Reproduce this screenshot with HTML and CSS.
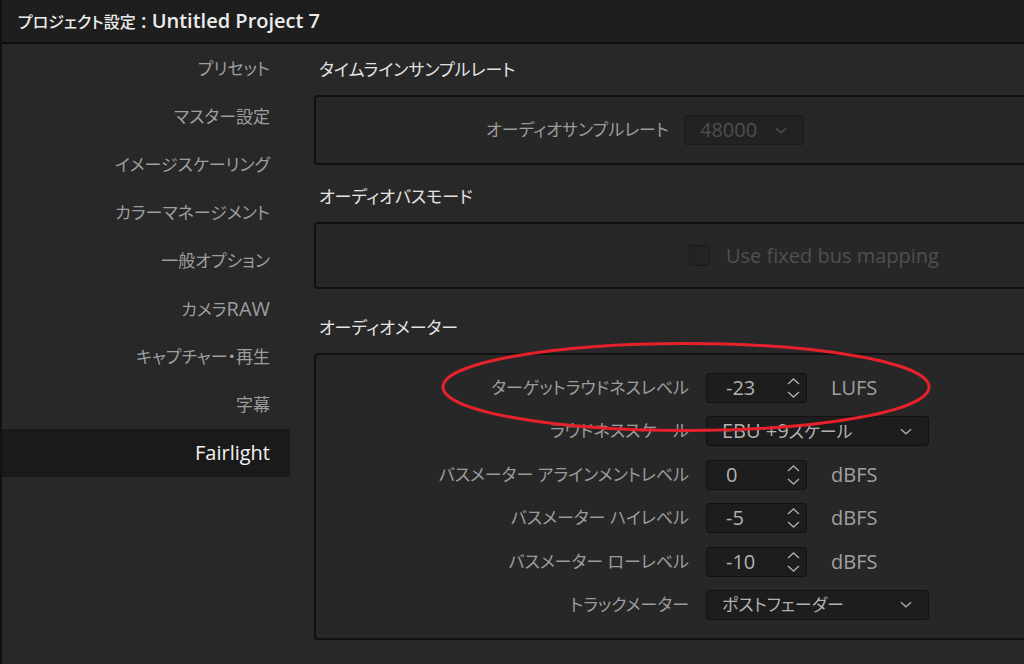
FILE: index.html
```html
<!DOCTYPE html>
<html lang="ja">
<head>
<meta charset="utf-8">
<title>プロジェクト設定</title>
<link rel="stylesheet" href="styles.css">
</head>
<body>
<div class="app">
  <header class="titlebar">プロジェクト設定<span class="lat"> : Untitled Project 7</span></header>
  <div class="main">
    <nav class="sidebar">
      <div class="nav-item">プリセット</div>
      <div class="nav-item">マスター設定</div>
      <div class="nav-item">イメージスケーリング</div>
      <div class="nav-item">カラーマネージメント</div>
      <div class="nav-item">一般オプション</div>
      <div class="nav-item">カメラ<span class="lat">RAW</span></div>
      <div class="nav-item">キャプチャー・再生</div>
      <div class="nav-item">字幕</div>
      <div class="nav-item active"><span class="lat">Fairlight</span></div>
    </nav>
    <main class="content">
      <section class="section s1">
        <h2 class="sec-title">タイムラインサンプルレート</h2>
        <div class="box box-rate">
          <div class="row row-rate">
            <span class="label">オーディオサンプルレート</span>
            <div class="select select-disabled">
              <span class="lat">48000</span>
              <svg class="chev" viewBox="0 0 13 7"><polyline points="1,1 6.5,6 12,1"/></svg>
            </div>
          </div>
        </div>
      </section>
      <section class="section s2">
        <h2 class="sec-title">オーディオバスモード</h2>
        <div class="box box-bus">
          <label class="check-row">
            <span class="checkbox"></span>
            <span class="check-text lat">Use fixed bus mapping</span>
          </label>
        </div>
      </section>
      <section class="section s3">
        <h2 class="sec-title">オーディオメーター</h2>
        <div class="box box-meter">
          <div class="row">
            <span class="label">ターゲットラウドネスレベル</span>
            <div class="ctl">
              <div class="spin"><span class="lat">-23</span><span class="arrows"><svg viewBox="0 0 13 7"><polyline points="1,6 6.5,1 12,6"/></svg><svg viewBox="0 0 13 7"><polyline points="1,1 6.5,6 12,1"/></svg></span></div>
              <span class="unit lat">LUFS</span>
            </div>
          </div>
          <div class="row">
            <span class="label">ラウドネススケール</span>
            <div class="select select-wide">
              <span><span class="lat">EBU +9</span>スケール</span>
              <svg class="chev" viewBox="0 0 13 7"><polyline points="1,1 6.5,6 12,1"/></svg>
            </div>
          </div>
          <div class="row">
            <span class="label">バスメーター アラインメントレベル</span>
            <div class="ctl">
              <div class="spin"><span class="lat">0</span><span class="arrows"><svg viewBox="0 0 13 7"><polyline points="1,6 6.5,1 12,6"/></svg><svg viewBox="0 0 13 7"><polyline points="1,1 6.5,6 12,1"/></svg></span></div>
              <span class="unit lat">dBFS</span>
            </div>
          </div>
          <div class="row">
            <span class="label">バスメーター ハイレベル</span>
            <div class="ctl">
              <div class="spin"><span class="lat">-5</span><span class="arrows"><svg viewBox="0 0 13 7"><polyline points="1,6 6.5,1 12,6"/></svg><svg viewBox="0 0 13 7"><polyline points="1,1 6.5,6 12,1"/></svg></span></div>
              <span class="unit lat">dBFS</span>
            </div>
          </div>
          <div class="row">
            <span class="label">バスメーター ローレベル</span>
            <div class="ctl">
              <div class="spin"><span class="lat">-10</span><span class="arrows"><svg viewBox="0 0 13 7"><polyline points="1,6 6.5,1 12,6"/></svg><svg viewBox="0 0 13 7"><polyline points="1,1 6.5,6 12,1"/></svg></span></div>
              <span class="unit lat">dBFS</span>
            </div>
          </div>
          <div class="row">
            <span class="label">トラックメーター</span>
            <div class="select select-wide">
              <span>ポストフェーダー</span>
              <svg class="chev" viewBox="0 0 13 7"><polyline points="1,1 6.5,6 12,1"/></svg>
            </div>
          </div>
        </div>
      </section>
    </main>
  </div>
</div>
<svg class="annotation" viewBox="0 0 492 92" width="492" height="92"><ellipse cx="246" cy="46" rx="243" ry="43.5"/></svg>
</body>
</html>
```

FILE: styles.css
```css
html, body {
  margin: 0;
  padding: 0;
}
body {
  width: 1024px;
  height: 664px;
  overflow: hidden;
  background: #282828;
  font-family: "Open Sans", "Noto Sans CJK JP", sans-serif;
  font-feature-settings: "palt";
  font-size: 17px;
  color: #a0a0a0;
  position: relative;
}
.lat {
  font-size: 20px;
}
.app {
  height: 664px;
  border-left: 2px solid #121212;
  box-sizing: border-box;
}
.titlebar {
  height: 42px;
  line-height: 42px;
  background: #1e1e1e;
  border-bottom: 2px solid #0c0c0c;
  padding-left: 16px;
  color: #ececec;
  font-weight: 500;
  font-size: 16px;
}
.titlebar .lat {
  font-weight: 600;
}
.main {
  display: flex;
}
.sidebar {
  width: 288px;
  flex: none;
  padding-top: 1px;
}
.nav-item {
  height: 48px;
  line-height: 48px;
  text-align: right;
  padding-right: 20px;
  color: #9e9e9e;
}
.nav-item.active {
  background: #1a1a1a;
  color: #f2f2f2;
}
.content {
  flex: 1;
  margin-left: 24px;
  margin-right: -30px;
}
.sec-title {
  margin: 0;
  font-size: 17px;
  font-weight: 400;
  line-height: 24px;
  padding: 0 0 13px 5px;
  color: #e4e4e4;
}
.s1 { margin-top: 14px; }
.s2 { margin-top: 20px; }
.s3 { margin-top: 27px; }
.box {
  border: 2px solid #111;
  border-radius: 4px;
  background: #272727;
}
.box-rate {
  padding: 18px 0;
}
.box-bus {
  padding: 21px 0;
}
.box-meter {
  padding: 18px 0;
  display: flex;
  flex-direction: column;
  gap: 13.4px;
}
.row {
  display: grid;
  grid-template-columns: 373px auto;
  column-gap: 17px;
  align-items: center;
  height: 30px;
  line-height: 28px;
}
.row-rate {
  grid-template-columns: 353px auto;
  column-gap: 15px;
}
.label {
  text-align: right;
  white-space: nowrap;
  color: #9c9c9c;
}
.ctl {
  display: flex;
  align-items: center;
}
.spin, .select {
  box-sizing: border-box;
  height: 30px;
  background: #1d1d1d;
  border: 1px solid #121212;
  border-radius: 3px;
  display: flex;
  align-items: center;
  color: #b2b2b2;
}
.spin {
  width: 101px;
  padding-left: 19px;
  justify-content: space-between;
  padding-right: 6px;
}
.arrows {
  display: flex;
  flex-direction: column;
  gap: 6px;
}
.arrows svg {
  display: block;
  width: 13px;
  height: 7px;
  fill: none;
  stroke: #a8a8a8;
  stroke-width: 1.5;
}
.unit {
  margin-left: 24px;
  color: #a0a0a0;
}
.select {
  justify-content: space-between;
  padding-left: 15px;
  padding-right: 16px;
}
.select-wide {
  width: 223px;
}
.select-disabled {
  width: 120px;
  background: #222;
  border-color: #191919;
  color: #4e4e4e;
}
.chev {
  width: 12px;
  height: 7px;
  fill: none;
  stroke: #a8a8a8;
  stroke-width: 1.5;
}
.select-disabled .chev {
  stroke: #4e4e4e;
}
.check-row {
  display: flex;
  align-items: center;
  padding-left: 373px;
  height: 21px;
}
.checkbox {
  box-sizing: border-box;
  width: 21px;
  height: 21px;
  border: 1px solid #1a1a1a;
  background: #232323;
  border-radius: 3px;
}
.check-text {
  margin-left: 16px;
  color: #4f4f4f;
}
.annotation {
  position: absolute;
  left: 440px;
  top: 341px;
  fill: none;
  stroke: #e6212b;
  stroke-width: 3;
}
```
